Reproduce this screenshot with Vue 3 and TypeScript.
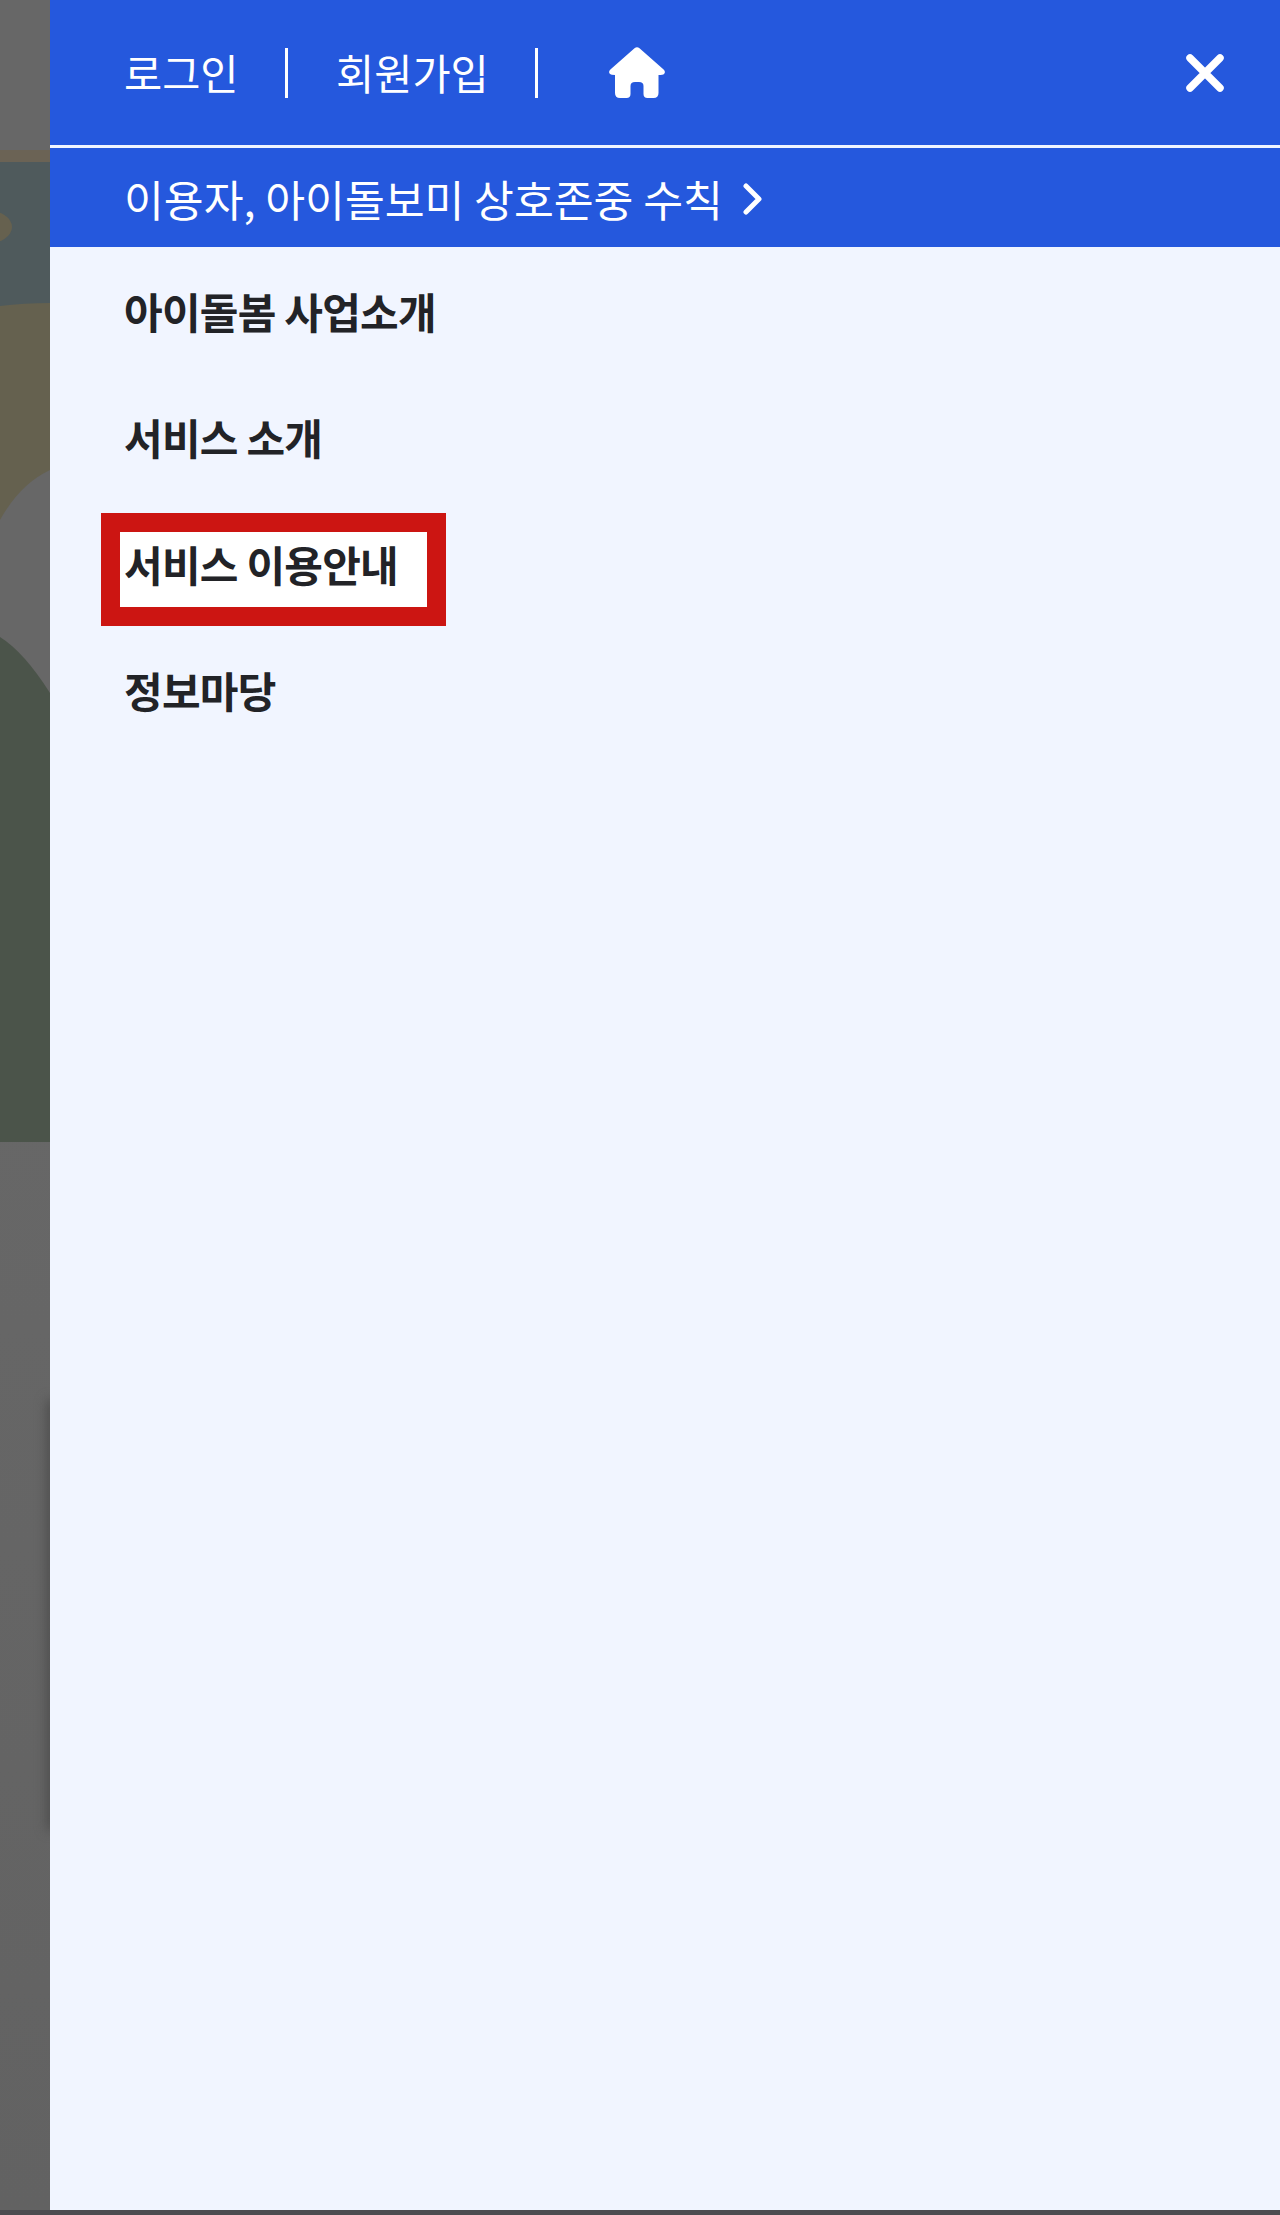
<template>
  <div class="page">
    <div class="backdrop">
      <svg class="scene" viewBox="0 0 50 2210" width="50" height="2210" preserveAspectRatio="none">
        <defs>
          <linearGradient id="dim" x1="0" y1="0" x2="0" y2="1">
            <stop offset="0" stop-color="#676767" />
            <stop offset="0.5" stop-color="#676767" />
            <stop offset="1" stop-color="#626262" />
          </linearGradient>
        </defs>
        <rect width="50" height="2210" fill="url(#dim)" />
        <rect y="150" width="50" height="14" fill="#6b6355" />
        <rect y="162" width="50" height="144" fill="#4f5a5c" />
        <ellipse cx="-14" cy="227" rx="26" ry="17" fill="#66614f" />
        <path d="M0 306 Q24 303 50 303 L50 470 Q20 484 0 520 Z" fill="#65614f" />
        <path d="M0 637 Q24 652 50 693 L50 1142 L0 1142 Z" fill="#4b544a" />
      </svg>
      <div class="edge-shadow"></div>
    </div>

    <div class="panel">
      <div class="top-bar">
        <span class="top-link">로그인</span>
        <i class="divider"></i>
        <span class="top-link">회원가입</span>
        <i class="divider"></i>
        <svg class="home" viewBox="0 0 56 51" width="56" height="51">
          <path
            d="M25.5 1.2 Q28 -0.6 30.5 1.2 L54.6 22.5 Q57 25 55 27 Q54 28 49.5 28 L49.5 46 Q49.5 51 44.5 51 L38.5 51 Q34.5 51 34.5 47 L34.5 39 Q34.5 35 30 35 L26 35 Q21.5 35 21.5 39 L21.5 47 Q21.5 51 17.5 51 L11 51 Q6 51 6 46 L6 28 Q2 28 1 27 Q-1 25 1.4 22.5 Z"
            fill="#fff"
          />
        </svg>
        <svg class="close" viewBox="0 0 38 38" width="38" height="38">
          <path d="M4 4 L34 34 M34 4 L4 34" stroke="#fff" stroke-width="7.5" stroke-linecap="round" />
        </svg>
      </div>

      <div class="notice">
        <span class="notice-text">{{ notice }}</span>
        <svg class="chevron" viewBox="0 0 20 32" width="20" height="32">
          <path d="M3 3 L16 16 L3 29" fill="none" stroke="#fff" stroke-width="5" stroke-linecap="round" stroke-linejoin="round" />
        </svg>
      </div>

      <ul class="menu">
        <li v-for="item in menu" :key="item.label" class="menu-item">
          <div v-if="item.marked" class="mark"></div>
          <span class="menu-label">{{ item.label }}</span>
        </li>
      </ul>
    </div>

    <div class="bottom-strip"></div>
  </div>
</template>

<script setup lang="ts">
const notice = '이용자, 아이돌보미 상호존중 수칙'

const menu = [
  { label: '아이돌봄 사업소개', marked: false },
  { label: '서비스 소개', marked: false },
  { label: '서비스 이용안내', marked: true },
  { label: '정보마당', marked: false }
]
</script>

<style>
html,
body {
  margin: 0;
  background: #666665;
}
</style>

<style scoped>
.page {
  width: 1280px;
  height: 2215px;
  display: grid;
  grid-template-columns: 50px 1fr;
  grid-template-rows: 2210px 5px;
  font-family: "Noto Sans CJK KR", "Noto Sans", sans-serif;
  overflow: hidden;
}

.backdrop {
  position: relative;
  overflow: hidden;
}

.scene {
  display: block;
}

.edge-shadow {
  position: absolute;
  right: -9px;
  top: 1400px;
  width: 12px;
  height: 430px;
  background: #4c4c4c;
  filter: blur(6px);
}

.panel {
  display: flex;
  flex-direction: column;
  background: #f1f5ff;
}

.top-bar {
  height: 145px;
  box-sizing: border-box;
  padding: 0 56px 0 74px;
  display: flex;
  align-items: center;
  background: #2558dd;
}

.top-link {
  font-size: 41.5px;
  font-weight: 400;
  color: #fff;
  line-height: 1;
}

.divider {
  display: block;
  width: 3px;
  height: 50px;
  margin: 0 48.5px 0 46px;
  background: #fff;
}

.home {
  margin-left: 23px;
  margin-top: -1px;
}

.close {
  margin-left: auto;
}

.notice {
  height: 102px;
  box-sizing: border-box;
  border-top: 3px solid #f1f5ff;
  padding: 0 0 0 74px;
  display: flex;
  align-items: center;
  gap: 20px;
  background: #2558dd;
  color: #fff;
  font-size: 43.3px;
  font-weight: 400;
  line-height: 1;
}

.notice-text {
  margin-top: 3px;
}

.chevron {
  flex: none;
  margin-top: 3px;
}

.menu {
  flex: 1;
  list-style: none;
  margin: 0;
  padding: 2px 0 0;
  box-shadow: -1px 0 0 #9a9a9f;
}

.menu-item {
  position: relative;
  height: 126.5px;
  box-sizing: border-box;
  display: flex;
  align-items: center;
  padding: 0 0 3px 74px;
}

.menu-label {
  position: relative;
  font-size: 42px;
  font-weight: 700;
  letter-spacing: -0.75px;
  color: #222327;
  line-height: 1;
}

/* red marker round the current entry */
.mark {
  position: absolute;
  left: 51px;
  top: 11px;
  width: 345px;
  height: 113px;
  box-sizing: border-box;
  border: 19px solid #cc1512;
  background: #fff;
}

.bottom-strip {
  grid-column: 1 / 3;
  background: #4c4c50;
}
</style>
